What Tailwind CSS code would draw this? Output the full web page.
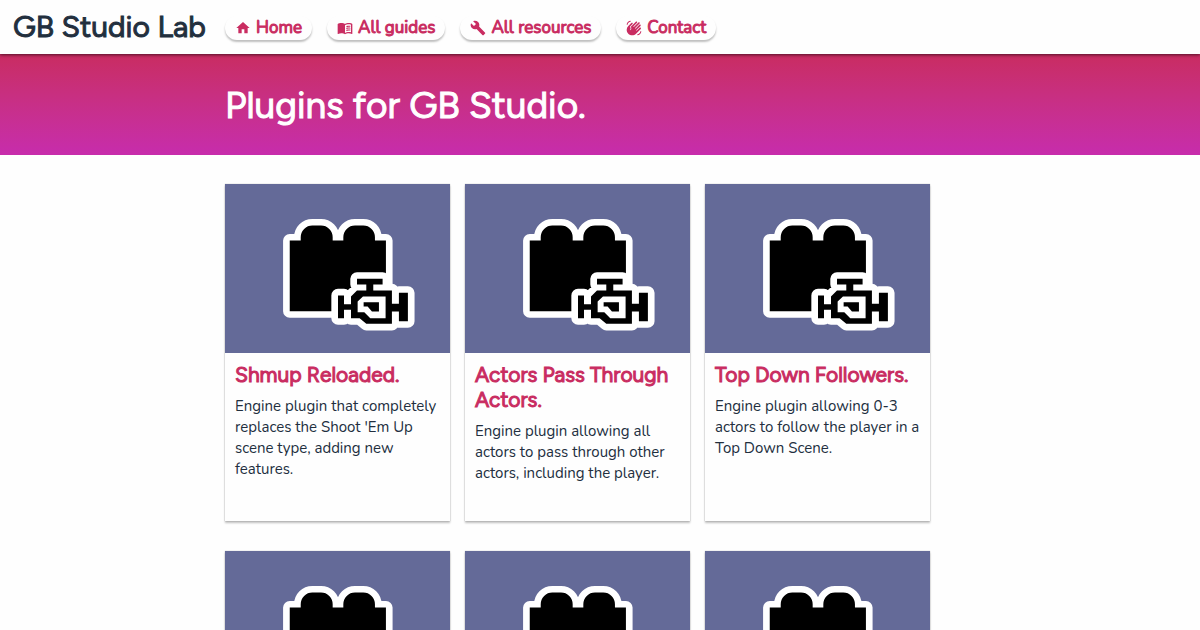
<!DOCTYPE html>
<html lang="en">
<head>
    <meta charset="UTF-8">
    <meta name="viewport" content="width=device-width, initial-scale=1.0">
    <title>Plugins for GB Studio - GB Studio Lab</title>
    <script src="https://cdn.jsdelivr.net/npm/@tailwindcss/browser@4"></script>
</head>
<body class="bg-[#fefefe] text-[#222f3e] font-[Nunito,Lato,sans-serif]">
    <!-- Plugin artwork, shared by all cards -->
    <svg class="hidden" aria-hidden="true">
        <symbol id="plugin-art" viewBox="0 0 675 507">
            <path fill="#000" stroke="#fff" stroke-width="40" stroke-linejoin="round" paint-order="stroke" d="M194 170H227V160a35 35 0 0 1 35-35h26a35 35 0 0 1 35 35V170H355V160a35 35 0 0 1 35-35h25a35 35 0 0 1 35 35V170H483V382H194Z"/>
            <g transform="translate(136 63)">
                <path fill="#fff" stroke="#fff" stroke-width="40" stroke-linejoin="round" d="M203 272H221V298H242V275L260 257H288V239H260V222H337V239H309V257H365V297H386V264H413V349H386V320H365V357H288L268 340H242V315H221V340H203Z"/>
                <path fill="#000" fill-rule="evenodd" d="M203 272H221V298H242V275L260 257H288V239H260V222H337V239H309V257H365V297H386V264H413V349H386V320H365V357H288L268 340H242V315H221V340H203Z M262 290L278 275H346V340H300L282 322H262Z M280 292H326V320H305L292 305H280Z"/>
            </g>
        </symbol>
    </svg>

    <header class="relative z-10 flex items-center h-[54px] bg-[#fefefe] shadow-[0_1px_3px_rgba(0,0,0,0.6)]">
        <a href="#" class="w-[225px] shrink-0 pl-[13px] text-[30px] leading-[54px] font-normal [-webkit-text-stroke:1px] whitespace-nowrap font-[Figtree,Inter,sans-serif]">GB Studio Lab</a>
        <nav class="flex gap-[15px] pt-px text-[17px] leading-6 font-normal [-webkit-text-stroke:1px] text-[#c92c61] whitespace-nowrap">
            <a href="#" class="flex items-center gap-[5px] h-6 px-[10px] rounded-full shadow-[0_2px_2px_rgba(0,0,0,0.25)]">
                <svg class="w-4 h-4" viewBox="0 0 24 24" fill="currentColor"><path d="M10 20v-6h4v6h5v-8h3L12 3 2 12h3v8z"/></svg>
                Home
            </a>
            <a href="#" class="flex items-center gap-[5px] h-6 px-[10px] rounded-full shadow-[0_2px_2px_rgba(0,0,0,0.25)]">
                <svg class="w-4 h-4" viewBox="0 0 24 24" fill="currentColor"><path d="M21 5c-1.11-.35-2.33-.5-3.5-.5-1.95 0-4.05.4-5.5 1.5-1.45-1.1-3.55-1.5-5.5-1.5S2.45 4.9 1 6v14.65c0 .25.25.5.5.5.1 0 .15-.05.25-.05C3.1 20.45 5.05 20 6.5 20c1.95 0 4.05.4 5.5 1.5 1.35-.85 3.8-1.5 5.5-1.5 1.65 0 3.35.3 4.75 1.05.1.05.15.05.25.05.25 0 .5-.25.5-.5V6c-.6-.45-1.25-.75-2-1zm0 13.5c-1.1-.35-2.3-.5-3.5-.5-1.7 0-4.15.65-5.5 1.5V8c1.35-.85 3.8-1.5 5.5-1.5 1.2 0 2.4.15 3.5.5v11.5z"/><path d="M14 9.2c2-.8 4.2-.9 6-.4v1.5c-2-.5-4-.4-6 .5zM14 12c2-.8 4.2-.9 6-.4v1.5c-2-.5-4-.4-6 .5zM14 14.8c2-.8 4.2-.9 6-.4v1.5c-2-.5-4-.4-6 .5z"/></svg>
                All guides
            </a>
            <a href="#" class="flex items-center gap-[5px] h-6 px-[10px] rounded-full shadow-[0_2px_2px_rgba(0,0,0,0.25)]">
                <svg class="w-4 h-4" viewBox="0 0 24 24" fill="currentColor"><path d="M22.7 19l-9.1-9.1c.9-2.3.4-5-1.5-6.9-2-2-5-2.4-7.4-1.3L9 6 6 9 1.6 4.7C.4 7.1.9 10.1 2.9 12.1c1.9 1.9 4.6 2.4 6.9 1.5l9.1 9.1c.4.4 1 .4 1.4 0l2.3-2.3c.5-.4.5-1.1.1-1.4z"/></svg>
                All resources
            </a>
            <a href="#" class="flex items-center gap-[5px] h-6 px-[10px] rounded-full shadow-[0_2px_2px_rgba(0,0,0,0.25)]">
                <svg class="w-4 h-4" viewBox="0 0 24 24" fill="currentColor"><path d="M23 17c0 3.31-2.69 6-6 6v-1.5c2.48 0 4.5-2.02 4.5-4.5H23zM1 7c0-3.31 2.69-6 6-6v1.5C4.52 2.5 2.5 4.52 2.5 7H1zm7.01-2.68l-4.6 4.6c-3.22 3.22-3.22 8.45 0 11.67s8.45 3.22 11.67 0l7.07-7.07c.49-.49.49-1.28 0-1.77s-1.28-.49-1.77 0l-4.42 4.42-.71-.71 6.54-6.54c.49-.49.49-1.28 0-1.77s-1.28-.49-1.77 0l-5.83 5.83-.71-.71 6.89-6.89c.49-.49.49-1.28 0-1.77s-1.28-.49-1.77 0l-6.89 6.89-.7-.7 5.5-5.5c.49-.49.49-1.28 0-1.77s-1.28-.49-1.77 0l-7.62 7.62c1.22 1.57 1.11 3.83-.33 5.27l-.71-.71c1.17-1.17 1.17-3.07 0-4.24l-.35-.35 4.07-4.07c.49-.49.49-1.28 0-1.77-.5-.45-1.3-.45-1.79.04z"/></svg>
                Contact
            </a>
        </nav>
    </header>

    <section class="bg-linear-to-b from-[#c92c61] to-[#c72cac]">
        <div class="max-w-[750px] mx-auto pt-[27px] pb-[26px]">
            <h1 class="text-[37px] leading-[48px] font-normal [-webkit-text-stroke:1px] text-white font-[Figtree,Inter,sans-serif]">Plugins for GB Studio.</h1>
        </div>
    </section>

    <main class="max-w-[750px] mx-auto pt-[29px] pr-[45px]">
        <div class="grid grid-cols-3 gap-x-[15px] gap-y-[30px]">
            <article class="min-h-[337px] shadow-[0_2px_2px_rgba(0,0,0,0.25),0_0_1px_rgba(0,0,0,0.3)]">
                <svg class="block w-full aspect-[4/3] bg-[#646a98]"><use href="#plugin-art"/></svg>
                <div class="px-[10px] py-[9px]">
                    <h2 class="mb-[9px] text-[21px] leading-[25px] font-normal [-webkit-text-stroke:1px] text-[#c92c61] font-[Figtree,Inter,sans-serif]"><a href="#">Shmup Reloaded.</a></h2>
                    <p class="text-[15px] leading-[21px]">Engine plugin that completely replaces the Shoot 'Em Up scene type, adding new features.</p>
                </div>
            </article>
            <article class="min-h-[337px] shadow-[0_2px_2px_rgba(0,0,0,0.25),0_0_1px_rgba(0,0,0,0.3)]">
                <svg class="block w-full aspect-[4/3] bg-[#646a98]"><use href="#plugin-art"/></svg>
                <div class="px-[10px] py-[9px]">
                    <h2 class="mb-[9px] text-[21px] leading-[25px] font-normal [-webkit-text-stroke:1px] text-[#c92c61] font-[Figtree,Inter,sans-serif]"><a href="#">Actors Pass Through Actors.</a></h2>
                    <p class="text-[15px] leading-[21px]">Engine plugin allowing all actors to pass through other actors, including the player.</p>
                </div>
            </article>
            <article class="min-h-[337px] shadow-[0_2px_2px_rgba(0,0,0,0.25),0_0_1px_rgba(0,0,0,0.3)]">
                <svg class="block w-full aspect-[4/3] bg-[#646a98]"><use href="#plugin-art"/></svg>
                <div class="px-[10px] py-[9px]">
                    <h2 class="mb-[9px] text-[21px] leading-[25px] font-normal [-webkit-text-stroke:1px] text-[#c92c61] font-[Figtree,Inter,sans-serif]"><a href="#">Top Down Followers.</a></h2>
                    <p class="text-[15px] leading-[21px]">Engine plugin allowing 0-3 actors to follow the player in a Top Down Scene.</p>
                </div>
            </article>
            <article class="min-h-[337px] shadow-[0_2px_2px_rgba(0,0,0,0.25),0_0_1px_rgba(0,0,0,0.3)]">
                <svg class="block w-full aspect-[4/3] bg-[#646a98]"><use href="#plugin-art"/></svg>
            </article>
            <article class="min-h-[337px] shadow-[0_2px_2px_rgba(0,0,0,0.25),0_0_1px_rgba(0,0,0,0.3)]">
                <svg class="block w-full aspect-[4/3] bg-[#646a98]"><use href="#plugin-art"/></svg>
            </article>
            <article class="min-h-[337px] shadow-[0_2px_2px_rgba(0,0,0,0.25),0_0_1px_rgba(0,0,0,0.3)]">
                <svg class="block w-full aspect-[4/3] bg-[#646a98]"><use href="#plugin-art"/></svg>
            </article>
        </div>
    </main>
</body>
</html>
